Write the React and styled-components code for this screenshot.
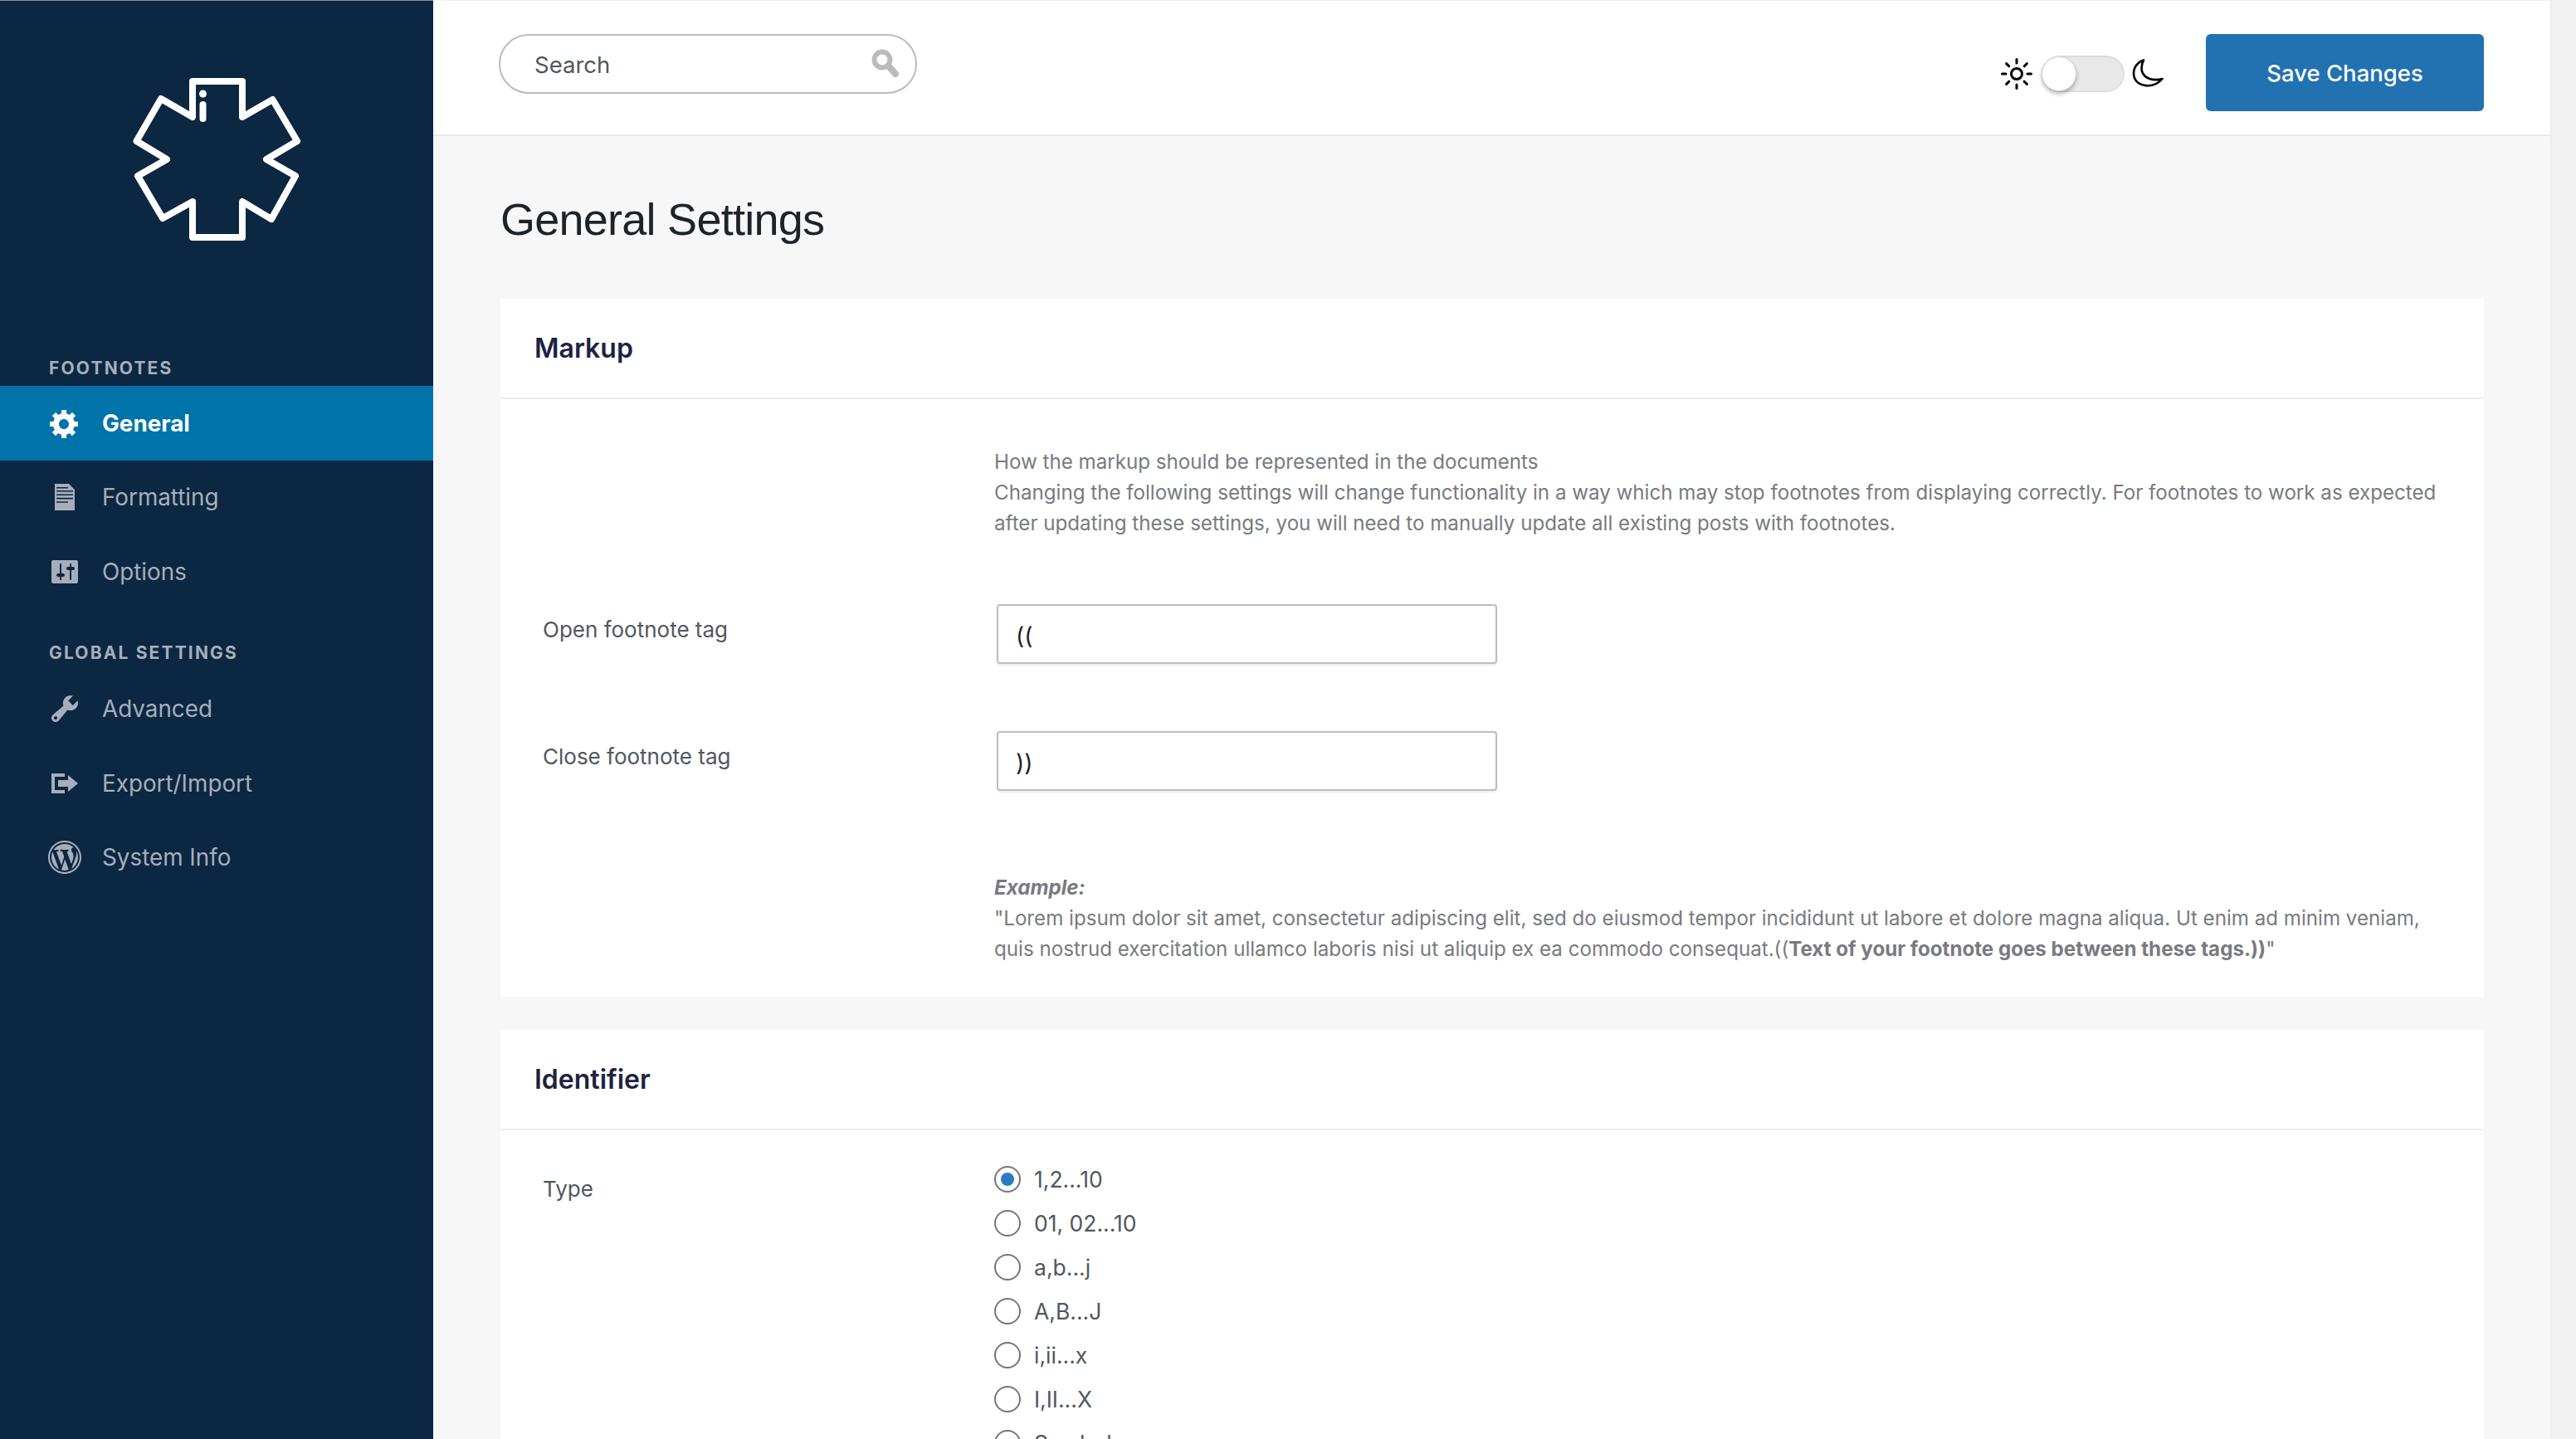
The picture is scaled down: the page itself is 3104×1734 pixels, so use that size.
import React from "react";
import styled, { createGlobalStyle } from "styled-components";

const Global = createGlobalStyle`
  html, body { margin: 0; padding: 0; background: #f7f7f7; }
  * { box-sizing: border-box; }
  body { font-family: Inter, "Liberation Sans", sans-serif; }
`;
const Page = styled.div`
  display: flex; width: 3104px; height: 1734px; overflow: hidden; background: #f7f7f7;
`;
const Sidebar = styled.aside`
  flex: 0 0 522px; background: #0b2742; border-top: 1px solid #8792a2; margin-right: 0;
`;
const Brand = styled.div`
  display: flex; justify-content: center; padding-top: 84px; height: 426px;
`;
const GroupTitle = styled.div`
  padding-left: 59px; height: 38px; line-height: 34px; font-size: 21px; font-weight: 700;
  letter-spacing: 2.15px; color: #a7aebb; text-transform: uppercase;
  margin-top: ${p => p.$top || 0}px; margin-bottom: ${p => p.$bottom || 0}px;
`;
const NavItem = styled.div`
  display: flex; align-items: center; gap: 25px; height: 89.5px; padding-left: 58px;
  font-size: 27.8px; font-weight: ${p => (p.$active ? 700 : 400)};
  color: ${p => (p.$active ? "#ffffff" : "#a7aebb")};
  background: ${p => (p.$active ? "#0073aa" : "transparent")};
`;
const NavGlyph = styled.svg`
  flex: 0 0 40px; width: 40px; height: 40px; fill: currentColor;
`;
const Main = styled.main`
  flex: 1; display: flex; flex-direction: column; min-width: 0;
`;
const Track = styled.div`
  flex: 0 0 31px; background: #f2f2f2; border-left: 2px solid #ececec;
`;
const Header = styled.header`
  flex: 0 0 164px; display: flex; align-items: flex-start; justify-content: space-between;
  padding: 40px 80px 0 79px; background: #fff;
  border-top: 1px solid #f0f0f0; border-bottom: 2px solid #e8e9ec;
`;
const SearchBox = styled.div`
  display: flex; align-items: center; justify-content: space-between;
  width: 504px; height: 72px; padding: 0 18px 0 41px; background: #fff;
  border: 2px solid #bbbbbb; border-radius: 36px;
`;
const SearchText = styled.span`
  font-size: 27.5px; color: #50575e; position: relative; top: 1px;
`;
const HeaderRight = styled.div`
  display: flex; align-items: center;
`;
const ThemeSwitch = styled.div`
  display: flex; align-items: center; margin-right: 51px; margin-top: 2px;
`;
const SunIcon = styled.svg`
  width: 38px; height: 38px; stroke: #000; fill: none; stroke-width: 3; stroke-linecap: round;
`;
const MoonIcon = styled.svg`
  width: 38px; height: 36px; stroke: #000; fill: none; stroke-width: 2.6; stroke-linejoin: round;
`;
const SwitchTrack = styled.div`
  display: flex; align-items: center; width: 100px; height: 44px; margin: 0 9px 0 11px;
  background: #e8e8e8; border: 2px solid #dedede; border-radius: 22px;
`;
const SwitchKnob = styled.div`
  width: 42px; height: 42px; margin-left: -2px; background: #fff; border-radius: 50%;
  border: 1px solid #d4d4d4; box-shadow: 0 3px 5px rgba(0,0,0,.28);
`;
const SaveButton = styled.button`
  width: 335px; height: 93px; border: 0; border-radius: 6px; background: #2271b1; color: #fff;
  font-family: inherit; font-size: 27.5px; font-weight: 500; padding: 0;
`;
const Content = styled.div`
  flex: 1; padding: 0 80px 0 81px;
`;
const Title = styled.h1`
  margin: 0; height: 196px; padding-top: 67px; font-family: "Liberation Sans", Arial, sans-serif;
  font-size: 54px; line-height: 66px; font-weight: 400; color: #1d2327; letter-spacing: -0.75px;
`;
const Panel = styled.section`
  background: #fff; margin-bottom: 40px;
`;
const PanelHead = styled.h2`
  margin: 0; height: 121px; padding-left: 41px; display: flex; align-items: center;
  font-size: 32px; font-weight: 600; color: #1d2340; border-bottom: 2px solid #eeeeee;
`;
const PanelBody = styled.div`
  padding: ${p => p.$top}px 50px ${p => p.$bottom}px 51px;
`;
const Row = styled.div`
  display: flex; align-items: flex-start; margin-top: ${p => p.$top || 0}px;
`;
const FieldLabel = styled.div`
  flex: 0 0 544px; font-size: 26px; line-height: 37px; color: #50575e; padding-top: ${p => p.$top || 0}px;
`;
const Note = styled.div`
  flex: 1; font-size: 24.15px; line-height: 37px; color: #777b80;
  b { font-weight: 700; }
  i { font-weight: 700; }
`;
const TextField = styled.div`
  width: 603px; height: 72px; margin-left: 3px; padding: 3px 21px 0; display: flex; align-items: center;
  font-size: 28px; color: #1d2327; background: #fff; border: 2px solid #bdbdbd; border-radius: 4px;
  box-shadow: 0 2px 3px rgba(0,0,0,.08);
`;
const RadioList = styled.div`
  display: flex; flex-direction: column;
`;
const RadioRow = styled.div`
  display: flex; align-items: center; gap: 16px; height: 53px; font-size: 26.5px; color: #50575e;
`;
const RadioDot = styled.span`
  flex: 0 0 32px; width: 32px; height: 32px; border-radius: 50%; border: 2px solid #757575;
  display: flex; align-items: center; justify-content: center;
  &::after {
    content: ""; width: 16px; height: 16px; border-radius: 50%;
    background: ${p => (p.$on ? "#2b7cc4" : "transparent")};
  }
`;

const gear = "M18 12h-2.18c-.17.7-.44 1.35-.81 1.93l1.54 1.54-2.1 2.1-1.54-1.54c-.58.36-1.23.63-1.91.79V19H8v-2.18c-.68-.16-1.33-.43-1.91-.79l-1.54 1.54-2.12-2.12 1.54-1.54c-.36-.58-.63-1.23-.79-1.91H1V9.03h2.17c.16-.7.44-1.35.8-1.94L2.43 5.55l2.1-2.1 1.54 1.54c.58-.37 1.24-.64 1.93-.81V2h3v2.18c.68.16 1.33.43 1.91.79l1.54-1.54 2.12 2.12-1.54 1.54c.36.59.64 1.24.8 1.94H18V12zm-8.5 1.5c1.66 0 3-1.34 3-3s-1.34-3-3-3-3 1.34-3 3 1.34 3 3 3z";
const doc = "M4 2h8.500L16 5.500V18H4V2zm1 2v.8h7V4H5zm0 2v.8h10V6H5zm0 2.200V9h10v-.8H5zm0 2.200v.8h10v-.8H5zm0 2.200v.8h7v-.8H5z";
const sliders = "M18 16V4c0-.55-.45-1-1-1H3c-.55 0-1 .45-1 1v12c0 .55.45 1 1 1h14c.55 0 1-.45 1-1zM8 11h1c.55 0 1 .45 1 1s-.45 1-1 1H8v1.5c0 .28-.22.5-.5.5s-.5-.22-.5-.5V13H6c-.55 0-1-.45-1-1s.45-1 1-1h1V5.5c0-.28.22-.5.5-.5s.5.22.5.5V11zm5-2h-1c-.55 0-1-.45-1-1s.45-1 1-1h1V5.5c0-.28.22-.5.5-.5s.5.22.5.5V7h1c.55 0 1 .45 1 1s-.45 1-1 1h-1v5.5c0 .28-.22.5-.5.5s-.5-.22-.5-.5V9z";
const wrench = "M16.68 9.77c-1.34 1.34-3.3 1.67-4.95.99l-5.41 6.52c-.99.99-2.59.99-3.58 0s-.99-2.59 0-3.57l6.52-5.42c-.68-1.65-.35-3.61.99-4.95 1.28-1.28 3.12-1.62 4.72-1.06l-2.89 2.89 2.82 2.82 2.86-2.87c.53 1.58.18 3.39-1.08 4.65zM3.81 16.21c.4.39 1.04.39 1.43 0 .4-.4.4-1.04 0-1.43-.39-.4-1.03-.4-1.43 0-.39.39-.39 1.03 0 1.43z";
const migrate = "M2 4h8v2H4v8h6v2H2V4zm4 4h6V5l6 5-6 5v-3H6V8z";
const wp = "M20 10c0-5.52-4.48-10-10-10S0 4.48 0 10s4.48 10 10 10 10-4.48 10-10zM10 1.01c4.96 0 8.99 4.03 8.99 8.99s-4.03 8.99-8.99 8.99S1.01 14.96 1.01 10 5.04 1.01 10 1.01zM8.01 14.82L4.96 6.61c.49-.03 1.05-.08 1.05-.08.43-.05.38-1.01-.06-.99 0 0-1.29.1-2.13.1-.15 0-.33 0-.52-.01 1.44-2.17 3.9-3.6 6.7-3.6 2.09 0 3.99.79 5.41 2.09-.6-.08-1.45.35-1.45 1.42 0 .66.38 1.22.79 1.88.31.54.5 1.22.5 2.21 0 1.34-1.27 4.48-1.27 4.48l-2.71-7.5c.48-.03.75-.16.75-.16.43-.05.38-1.1-.05-1.08 0 0-1.3.11-2.14.11-.78 0-2.11-.11-2.11-.11-.43-.02-.48 1.06-.05 1.08l.84.08 1.12 3.04zm6.02 2.15L16.64 10s.67-1.69.39-3.81c.63 1.14.94 2.42.94 3.81 0 2.96-1.56 5.58-3.94 6.97zM2.68 6.77L6.5 17.25c-2.67-1.3-4.47-4.08-4.47-7.25 0-1.16.2-2.23.65-3.23zm7.45 4.53l2.29 6.25c-.75.27-1.57.42-2.42.42-.72 0-1.41-.11-2.06-.3z";

const Nav = ({ d, active, children }) => (
  <NavItem $active={active}>
    <NavGlyph viewBox="0 0 20 20"><path fillRule="evenodd" d={d} /></NavGlyph>
    {children}
  </NavItem>
);

const rays = [0, 45, 90, 135, 180, 225, 270, 315];

export default function App() {
  return (
    <Page>
      <Global />
      <Sidebar>
        <Brand>
          <svg width="220" height="216" viewBox="150 85 220 216">
            <path fill="none" stroke="#fff" strokeWidth="8" strokeLinejoin="round" strokeLinecap="round"
              d="M231 98H291V141L327.500 120L357 170L320 192L355 212L326 264L291 243V286H231V243L195 263L165 212L200 192L163.500 170L193 119L231 141Z" />
            <circle cx="243.500" cy="113" r="4.500" fill="#fff" />
            <line x1="243.500" y1="126" x2="243.500" y2="143" stroke="#fff" strokeWidth="8" strokeLinecap="round" />
          </svg>
        </Brand>
        <GroupTitle>Footnotes</GroupTitle>
        <Nav d={gear} active>General</Nav>
        <Nav d={doc}>Formatting</Nav>
        <Nav d={sliders}>Options</Nav>
        <GroupTitle $top={36} $bottom={2}>Global Settings</GroupTitle>
        <Nav d={wrench}>Advanced</Nav>
        <Nav d={migrate}>Export/Import</Nav>
        <Nav d={wp}>System Info</Nav>
      </Sidebar>
      <Main>
        <Header>
          <SearchBox>
            <SearchText>Search</SearchText>
            <svg width="36" height="36" viewBox="0 0 36 36">
              <circle cx="14" cy="13" r="9.500" fill="none" stroke="#bbb" strokeWidth="6" />
              <line x1="22" y1="21" x2="30" y2="30" stroke="#bbb" strokeWidth="8" strokeLinecap="round" />
            </svg>
          </SearchBox>
          <HeaderRight>
            <ThemeSwitch>
              <SunIcon viewBox="0 0 38 38">
                <circle cx="19" cy="19" r="6.500" />
                {rays.map(a => (
                  <line key={a} x1="19" y1="6" x2="19" y2="1.500" transform={`rotate(${a} 19 19)`} />
                ))}
              </SunIcon>
              <SwitchTrack><SwitchKnob /></SwitchTrack>
              <MoonIcon viewBox="0 0 38 36">
                <path d="M14 1.500C4 5 0 14 3 23C7 33 25 37 36.500 24C26 27 15 24 12 15C11 10 12 5 14 1.500Z" />
              </MoonIcon>
            </ThemeSwitch>
            <SaveButton>Save Changes</SaveButton>
          </HeaderRight>
        </Header>
        <Content>
          <Title>General Settings</Title>
          <Panel>
            <PanelHead>Markup</PanelHead>
            <PanelBody $top={57} $bottom={39}>
              <Row>
                <FieldLabel />
                <Note>
                  How the markup should be represented in the documents<br />
                  Changing the following settings will change functionality in a way which may stop footnotes from displaying correctly. For footnotes to work as expected after updating these settings, you will need to manually update all existing posts with footnotes.
                </Note>
              </Row>
              <Row $top={79}>
                <FieldLabel $top={12}>Open footnote tag</FieldLabel>
                <TextField>((</TextField>
              </Row>
              <Row $top={81}>
                <FieldLabel $top={12}>Close footnote tag</FieldLabel>
                <TextField>))</TextField>
              </Row>
              <Row $top={98}>
                <FieldLabel />
                <Note>
                  <i>Example:</i><br />
                  "Lorem ipsum dolor sit amet, consectetur adipiscing elit, sed do eiusmod tempor incididunt ut labore et dolore magna aliqua. Ut enim ad minim veniam, quis nostrud exercitation ullamco laboris nisi ut aliquip ex ea commodo consequat.((<b>Text of your footnote goes between these tags.))</b>"
                </Note>
              </Row>
            </PanelBody>
          </Panel>
          <Panel>
            <PanelHead>Identifier</PanelHead>
            <PanelBody $top={32} $bottom={40}>
              <Row>
                <FieldLabel $top={20}>Type</FieldLabel>
                <RadioList>
                  {["1,2...10", "01, 02...10", "a,b...j", "A,B...J", "i,ii...x", "I,II...X", "Symbol"].map((t, i) => (
                    <RadioRow key={t}><RadioDot $on={i === 0} />{t}</RadioRow>
                  ))}
                </RadioList>
              </Row>
            </PanelBody>
          </Panel>
        </Content>
      </Main>
      <Track />
    </Page>
  );
}
